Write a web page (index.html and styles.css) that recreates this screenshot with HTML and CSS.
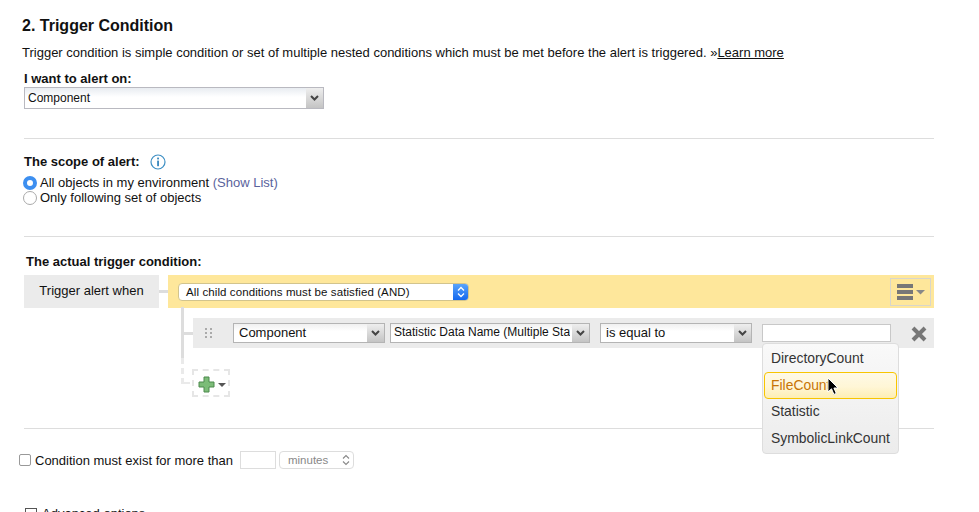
FILE: index.html
```html
<!DOCTYPE html>
<html lang="en">
<head>
    <meta charset="UTF-8">
    <meta name="viewport" content="width=device-width, initial-scale=1.0">
    <title>Trigger Condition</title>
    <link rel="stylesheet" href="styles.css">
</head>
<body>
    <h2 class="title">2. Trigger Condition</h2>
    <p class="intro">Trigger condition is simple condition or set of multiple nested conditions which must be met before the alert is triggered. »<a href="#">Learn more</a></p>

    <div class="section section-alert">
        <div class="label">I want to alert on:</div>
        <div class="combo combo-alert"><span class="combo-text">Component</span><span class="combo-arrow"><svg width="9" height="6" viewBox="0 0 9 6"><path d="M1 1l3.5 3.5L8 1" fill="none" stroke="#444" stroke-width="2"/></svg></span></div>
    </div>

    <div class="section section-scope">
        <div class="label scope-label">The scope of alert:
            <svg class="info" width="16" height="16" viewBox="0 0 16 16"><circle cx="8" cy="8" r="7" fill="#fff" stroke="#3d8fc4" stroke-width="1.2"/><rect x="7.2" y="3.6" width="1.7" height="1.8" fill="#2b7fb8"/><rect x="7.2" y="6.6" width="1.7" height="5.6" fill="#2b7fb8"/></svg>
        </div>
        <div class="radio-row"><span class="radio radio-on"></span>All objects in my environment <a class="show-list" href="#">(Show List)</a></div>
        <div class="radio-row"><span class="radio"></span>Only following set of objects</div>
    </div>

    <div class="section section-trigger">
        <div class="label trigger-label">The actual trigger condition:</div>
        <div class="trigger-head">
            <div class="when">Trigger alert when</div>
            <div class="when-line"></div>
            <div class="and-bar">
                <div class="mac-select"><span class="mac-text">All child conditions must be satisfied (AND)</span><span class="mac-arrows"><svg width="8" height="12" viewBox="0 0 8 12"><path d="M1 4.5L4 1.5l3 3M1 7.5l3 3 3-3" fill="none" stroke="#fff" stroke-width="1.3"/></svg></span></div>
                <div class="menu-btn">
                    <svg width="30" height="20" viewBox="0 0 30 20"><rect x="1" y="2" width="16" height="4" fill="#777"/><rect x="1" y="8" width="16" height="4" fill="#777"/><rect x="1" y="14" width="16" height="4" fill="#777"/><path d="M20 8h9l-4.500 4.500z" fill="#888"/></svg>
                </div>
            </div>
        </div>

        <div class="tree">
            <div class="condition">
                <svg class="grip" width="7" height="11" viewBox="0 0 7 11"><g fill="#aaa"><rect width="2" height="2"/><rect x="5" width="2" height="2"/><rect y="4" width="2" height="2"/><rect x="5" y="4" width="2" height="2"/><rect y="8" width="2" height="2"/><rect x="5" y="8" width="2" height="2"/></g></svg>
                <div class="combo combo-a"><span class="combo-text">Component</span><span class="combo-arrow"><svg width="9" height="6" viewBox="0 0 9 6"><path d="M1 1l3.5 3.5L8 1" fill="none" stroke="#444" stroke-width="2"/></svg></span></div>
                <div class="combo combo-b"><span class="combo-text">Statistic Data Name (Multiple Statistics)</span><span class="combo-arrow"><svg width="9" height="6" viewBox="0 0 9 6"><path d="M1 1l3.5 3.5L8 1" fill="none" stroke="#444" stroke-width="2"/></svg></span></div>
                <div class="combo combo-c"><span class="combo-text">is equal to</span><span class="combo-arrow"><svg width="9" height="6" viewBox="0 0 9 6"><path d="M1 1l3.5 3.5L8 1" fill="none" stroke="#444" stroke-width="2"/></svg></span></div>
                <div class="value-box"></div>
                <svg class="remove" width="16" height="16" viewBox="0 0 16 16"><path d="M2 2l12 12M14 2L2 14" stroke="#777" stroke-width="4"/></svg>
            </div>

            <div class="add-btn">
                <svg width="34" height="18" viewBox="0 0 34 18"><path d="M6 1h5v5h5v5h-5v5H6v-5H1V6h5z" fill="#7cbc78" stroke="#4d8a4c"/><path d="M20 7h8l-4 4z" fill="#555"/></svg>
            </div>

            <ul class="suggest">
                <li>DirectoryCount</li>
                <li class="suggest-hover">FileCount</li>
                <li>Statistic</li>
                <li>SymbolicLinkCount</li>
            </ul>
            <svg class="cursor" width="13" height="19" viewBox="0 0 13 19"><path d="M1 1v14l3.5-3.200 2.400 5.600 2.400-1-2.400-5.400H11z" fill="#000" stroke="#fff"/></svg>
        </div>
    </div>

    <div class="duration">
        <span class="check"></span>
        <span class="duration-text">Condition must exist for more than</span>
        <span class="num-box"></span>
        <span class="unit-select">minutes<svg width="8" height="12" viewBox="0 0 8 12"><path d="M1 4.5L4 1.5l3 3M1 7.5l3 3 3-3" fill="none" stroke="#888" stroke-width="1.1"/></svg></span>
    </div>

    <div class="advanced"><span class="plus-box"></span>Advanced options</div>
</body>
</html>
```

FILE: styles.css
```css
html, body {
    height: 512px;
    overflow: hidden;
}
body {
    margin: 0;
    padding: 0 45px 0 24px;
    font-family: "Liberation Sans", Arial, sans-serif;
    font-size: 12px;
    color: #111;
    background-color: #fff;
}
.title {
    margin: 16px 0 0 -2px;
    font-size: 16px;
    line-height: 19px;
    font-weight: bold;
    color: #111;
}
.intro {
    margin: 10px 0 0 -2px;
    font-size: 13px;
    line-height: 16px;
    white-space: nowrap;
}
.intro a {
    color: #111;
}
.label {
    font-size: 13px;
    font-weight: bold;
    line-height: 14px;
}
.section {
    border-bottom: 1px solid #ddd;
}
.section-alert {
    margin-top: 11px;
    padding-bottom: 29px;
}
.section-scope {
    padding: 15px 0 31px;
}
.section-trigger {
    padding-top: 18px;
    padding-bottom: 0;
    height: 173px;
}

/* select boxes */
.combo {
    display: flex;
    height: 22px;
    box-sizing: border-box;
    border: 1px solid #b9b9c0;
    background: linear-gradient(#e8ecf1, #fff 45%);
}
.combo-text {
    flex: 1;
    padding-left: 3px;
    line-height: 21px;
    overflow: hidden;
    white-space: nowrap;
}
.combo-arrow {
    display: flex;
    align-items: center;
    justify-content: center;
    width: 17px;
    background: linear-gradient(#eee, #c4c4c4);
    flex: none;
}
.combo-alert {
    width: 300px;
    margin-top: 1px;
}
.condition .combo {
    height: 20px;
    border: 1px solid #b4b4b4;
    font-size: 13px;
    background: linear-gradient(#f0f0f0, #fff 40%);
}
.condition .combo-text {
    padding-left: 5px;
    line-height: 17px;
}
.condition .combo-arrow {
    width: 17px;
}
.combo-a {
    width: 152px;
    margin-left: 21px;
}
.combo-b {
    width: 200px;
    margin-left: 5px;
}
.condition .combo-b .combo-text {
    font-size: 12px;
    padding-left: 3px;
    margin-right: 2px;
}
.combo-c {
    width: 152px;
    margin-left: 10px;
}

/* scope */
.scope-label {
    display: flex;
    align-items: center;
    gap: 10px;
    height: 16px;
}
.info {
    flex: none;
}
.radio-row {
    display: flex;
    align-items: center;
    height: 15px;
    margin-left: -1px;
    font-size: 13px;
    white-space: pre;
}
.scope-label + .radio-row {
    margin-top: 5px;
}
.radio {
    width: 14px;
    height: 14px;
    box-sizing: border-box;
    margin-right: 3px;
    border: 1px solid #aaa;
    border-radius: 50%;
    background-color: #fff;
}
.radio-on {
    border: 4.5px solid #3d8ff0;
    background-color: #fff;
}
.show-list {
    color: #5a639c;
    text-decoration: none;
}

/* trigger tree */
.trigger-label {
    margin-left: 2px;
    margin-bottom: 6px;
}
.trigger-head {
    display: flex;
    height: 33px;
}
.when {
    width: 135px;
    height: 33px;
    background-color: #ebebeb;
    font-size: 13px;
    line-height: 31px;
    text-align: center;
    box-sizing: border-box;
}
.when-line {
    width: 9px;
    height: 3px;
    margin-top: 15px;
    background-color: #ddd;
}
.and-bar {
    flex: 1;
    display: flex;
    align-items: center;
    justify-content: space-between;
    padding: 0 3px 0 10px;
    background-color: #fee79b;
}
.mac-select {
    display: flex;
    width: 291px;
    height: 18px;
    box-sizing: border-box;
    border: 1px solid #d2c48d;
    border-radius: 4px;
    background-color: #fff;
    overflow: hidden;
}
.mac-text {
    flex: 1;
    padding-left: 7px;
    font-size: 11.5px;
    line-height: 17px;
    letter-spacing: 0.1px;
}
.mac-arrows {
    display: flex;
    align-items: center;
    justify-content: center;
    width: 15px;
    background: linear-gradient(#5aa4fb, #1468ee);
}
.menu-btn {
    display: flex;
    align-items: center;
    justify-content: center;
    width: 41px;
    height: 28px;
    box-sizing: border-box;
    border: 1px solid #d8d6cc;
}
.tree {
    position: relative;
    height: 120px;
    margin-left: 169px;
    padding-top: 10px;
}
.tree::before {
    content: "";
    position: absolute;
    left: -12px;
    top: -1px;
    width: 3px;
    height: 51px;
    background-color: #ddd;
}
.tree::after {
    content: "";
    position: absolute;
    left: -12px;
    top: 50px;
    height: 26px;
    width: 9px;
    border-left: 3px dashed #eaeaea;
    border-bottom: 2px dashed #eaeaea;
    box-sizing: border-box;
}
.condition {
    position: relative;
    display: flex;
    align-items: center;
    height: 30px;
    background-color: #ebebeb;
}
.condition::before {
    content: "";
    position: absolute;
    left: -9px;
    top: 14px;
    width: 9px;
    height: 3px;
    background-color: #ddd;
}
.grip {
    flex: none;
    margin-left: 12px;
}
.value-box {
    width: 129px;
    height: 18px;
    box-sizing: border-box;
    margin: 0 0 0 10px;
    border: 1px solid #c8c8c8;
    background-color: #fff;
}
.remove {
    margin-left: 20px;
    margin-top: 1px;
}
.add-btn {
    position: relative;
    z-index: 1;
    width: 38px;
    height: 28px;
    box-sizing: border-box;
    margin: 21px 0 0 -1px;
    padding: 5px 0 0 4px;
    border: 2px dashed #e6e6e6;
    background-color: #fff;
}
.suggest {
    position: absolute;
    z-index: 2;
    left: 569px;
    top: 35px;
    width: 137px;
    height: 111px;
    box-sizing: border-box;
    margin: 0;
    padding: 1px;
    list-style: none;
    border: 1px solid #ddd;
    border-radius: 4px;
    background: linear-gradient(#f9f9f9, #ececec);
    font-size: 13.9px;
    color: #333;
}
.suggest li {
    height: 27px;
    padding-left: 6px;
    box-sizing: border-box;
    line-height: 25px;
    border: 1px solid transparent;
    white-space: nowrap;
}
.suggest-hover {
    margin-bottom: -1px;
    border: 1px solid #f8c500 !important;
    border-radius: 4px;
    background: linear-gradient(#fef9e6, #fff6d6 55%, #fdeeb4);
    color: #c77405;
}
.cursor {
    position: absolute;
    z-index: 3;
    left: 634px;
    top: 69px;
}

/* duration row */
.duration {
    display: flex;
    align-items: center;
    height: 18px;
    margin: 22px 0 0 -5px;
}
.check {
    width: 12px;
    height: 12px;
    box-sizing: border-box;
    border: 1px solid #999;
    border-radius: 2px;
    background-color: #fff;
}
.duration-text {
    margin-left: 4px;
    font-size: 13px;
}
.num-box {
    width: 36px;
    height: 18px;
    box-sizing: border-box;
    margin-left: 7px;
    border: 1px solid #ddd;
}
.unit-select {
    display: flex;
    align-items: center;
    justify-content: space-between;
    width: 75px;
    height: 18px;
    box-sizing: border-box;
    margin-left: 3px;
    padding: 0 3px 0 8px;
    border: 1px solid #ddd;
    border-radius: 4px;
    color: #888;
    font-size: 11.5px;
}
.advanced {
    display: flex;
    align-items: center;
    margin: 37px 0 0 1px;
    font-size: 13px;
    line-height: 15px;
}
.plus-box {
    width: 12px;
    height: 12px;
    box-sizing: border-box;
    margin-right: 5px;
    border: 1px solid #555;
}
```
